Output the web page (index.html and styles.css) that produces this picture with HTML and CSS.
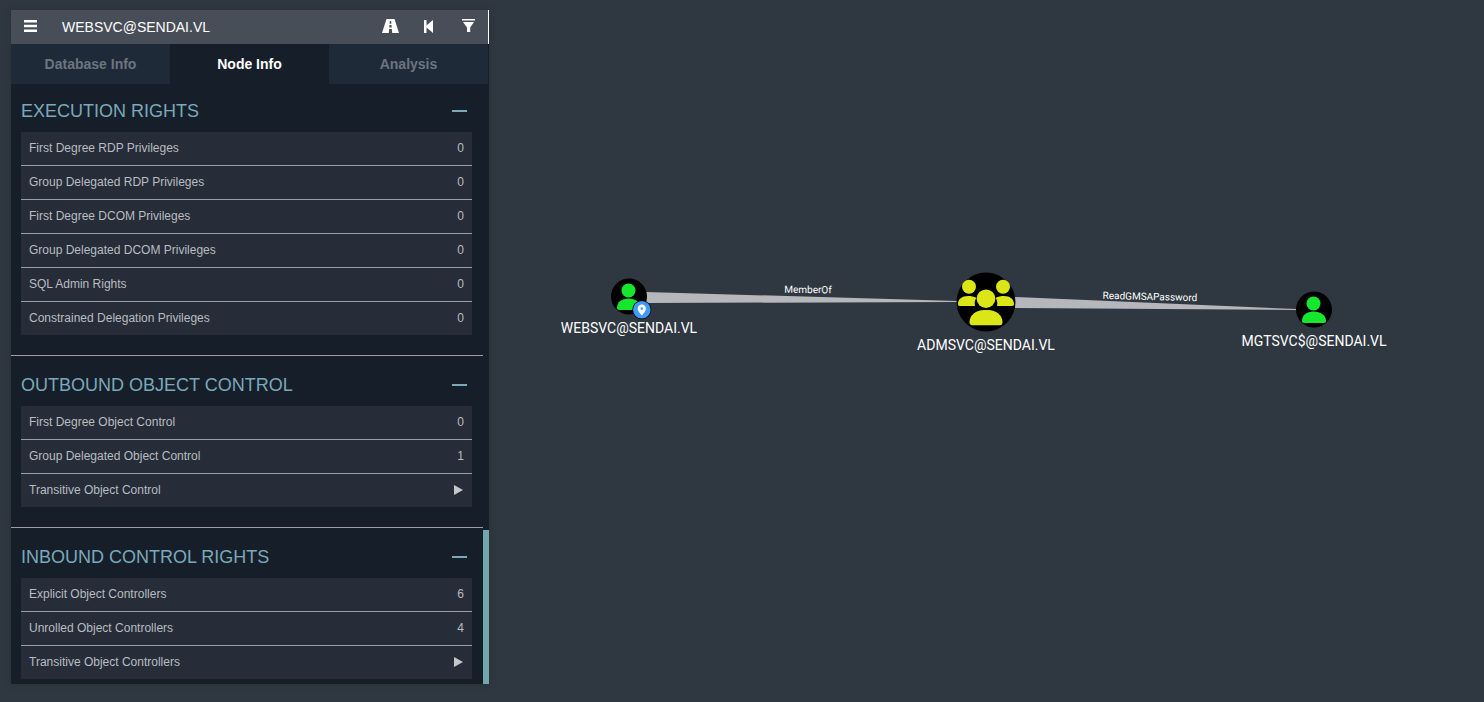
FILE: index.html
```html
<!DOCTYPE html>
<html lang="en">
<head>
    <meta charset="UTF-8">
    <title>BloodHound</title>
    <link rel="stylesheet" href="styles.css">
</head>
<body>
    <svg class="graph" width="1484" height="702" viewBox="0 0 1484 702">
        <defs>
            <g id="user-icon">
                <circle cx="-0.5" cy="-6.5" r="7"/>
                <path d="M-12 11 C-12 5 -7 1.500 -1 1.500 L0 1.500 C6 1.500 12 5 12 11 C12 12.300 11.500 13 10 13 L-10 13 C-11.500 13 -12 12.300 -12 11 Z"/>
            </g>
        </defs>

        <polygon class="edge" points="646,292 646,303 957,302 957,301"/>
        <polygon class="edge" points="1015,297 1015,308 1296,310 1296,309"/>
        <text class="edge-label" x="808" y="293" transform="rotate(0.7 808 289)">MemberOf</text>
        <text class="edge-label" x="1150" y="300" transform="rotate(1.4 1150 296)">ReadGMSAPassword</text>

        <circle cx="629" cy="296.500" r="18"/>
        <use href="#user-icon" x="629" y="297" class="user"/>
        <circle cx="641.800" cy="309.700" r="9.500" fill="#000"/>
        <circle cx="641.800" cy="309.700" r="8.800" fill="#3f9bf7"/>
        <path class="pin" d="M641.800 315.800 C639.600 312.900 637.700 310.800 637.700 308.500 C637.700 306.200 639.500 304.400 641.800 304.400 C644.100 304.400 645.900 306.200 645.900 308.500 C645.900 310.800 644 312.900 641.800 315.800 Z M641.800 307.200 A1.300 1.300 0 1 0 641.800 309.800 A1.300 1.300 0 1 0 641.800 307.200 Z"/>
        <text class="node-label" x="629" y="333">WEBSVC@SENDAI.VL</text>

        <circle cx="986" cy="302" r="29.500"/>
        <g class="group">
            <circle cx="969" cy="286.700" r="7"/>
            <circle cx="1003" cy="286.700" r="7"/>
            <path d="M958 304 C958 299 962 296 968 296 C971 296 974 296.500 976.500 298 C974.800 300 974.300 302.500 975 306 L960 306 C958.500 306 958 305.200 958 304 Z"/>
            <path d="M1014 304 C1014 299 1010 296 1004 296 C1001 296 998 296.500 995.500 298 C997.200 300 997.700 302.500 997 306 L1012 306 C1013.500 306 1014 305.200 1014 304 Z"/>
            <circle cx="986" cy="298.700" r="9.300"/>
            <path d="M969.500 322 C969.500 315 976 310 984 310 L988 310 C996 310 1002.500 315 1002.500 322 C1002.500 324.300 1001.500 325.300 999.500 325.300 L972.500 325.300 C970.500 325.300 969.500 324.300 969.500 322 Z"/>
        </g>
        <text class="node-label" x="986" y="350">ADMSVC@SENDAI.VL</text>

        <circle cx="1314" cy="309.500" r="18"/>
        <use href="#user-icon" x="1314" y="310" class="user"/>
        <text class="node-label" x="1314" y="346">MGTSVC$@SENDAI.VL</text>
    </svg>

    <div class="panel">
        <div class="panel-header">
            <button class="icon-btn menu-btn">
                <svg width="13" height="12" viewBox="0 0 13 12"><path d="M0 0h13v2.400H0zM0 4.800h13v2.400H0zM0 9.600h13V12H0z"/></svg>
            </button>
            <div class="node-name">WEBSVC@SENDAI.VL</div>
            <button class="icon-btn road-btn">
                <svg width="17" height="14" viewBox="0 0 17 14"><path fill-rule="evenodd" d="M4.500 0h8L17 14h-6.800l-.4-4H7.200l-.4 4H0zM7.800 2l-.2 2.800h1.800L9.200 2zM7.500 6l-.2 2.500h2.400L9.500 6z"/></svg>
            </button>
            <button class="icon-btn back-btn">
                <svg width="9" height="13" viewBox="0 0 9 13"><path d="M0 0h2.500v5.500L9 0v13L2.500 7.500V13H0z"/></svg>
            </button>
            <button class="icon-btn filter-btn">
                <svg width="13" height="14" viewBox="0 0 13 14"><path d="M0 0h13v1.500H0zM1 3h11L8.200 8.500V13L5 13V8.500z"/></svg>
            </button>
        </div>

        <div class="tabs">
            <div class="tab">Database Info</div>
            <div class="tab active">Node Info</div>
            <div class="tab">Analysis</div>
        </div>

        <div class="panel-body">
            <div class="section">
                <div class="section-head">
                    <h4>EXECUTION RIGHTS</h4>
                    <span class="collapse"></span>
                </div>
                <div class="rows">
                    <div class="row"><span>First Degree RDP Privileges</span><span>0</span></div>
                    <div class="row"><span>Group Delegated RDP Privileges</span><span>0</span></div>
                    <div class="row"><span>First Degree DCOM Privileges</span><span>0</span></div>
                    <div class="row"><span>Group Delegated DCOM Privileges</span><span>0</span></div>
                    <div class="row"><span>SQL Admin Rights</span><span>0</span></div>
                    <div class="row"><span>Constrained Delegation Privileges</span><span>0</span></div>
                </div>
            </div>

            <div class="section">
                <div class="section-head">
                    <h4>OUTBOUND OBJECT CONTROL</h4>
                    <span class="collapse"></span>
                </div>
                <div class="rows">
                    <div class="row"><span>First Degree Object Control</span><span>0</span></div>
                    <div class="row"><span>Group Delegated Object Control</span><span>1</span></div>
                    <div class="row"><span>Transitive Object Control</span><span class="play"></span></div>
                </div>
            </div>

            <div class="section">
                <div class="section-head">
                    <h4>INBOUND CONTROL RIGHTS</h4>
                    <span class="collapse"></span>
                </div>
                <div class="rows">
                    <div class="row"><span>Explicit Object Controllers</span><span>6</span></div>
                    <div class="row"><span>Unrolled Object Controllers</span><span>4</span></div>
                    <div class="row"><span>Transitive Object Controllers</span><span class="play"></span></div>
                </div>
            </div>
        </div>

        <div class="scroll-thumb"></div>
    </div>
</body>
</html>
```

FILE: styles.css
```css
* {
    margin: 0;
    padding: 0;
    box-sizing: border-box;
}

html, body {
    height: 100%;
    overflow: hidden;
}

body {
    background: #2f3840;
    font-family: 'Liberation Sans', Arial, sans-serif;
    padding: 10px 0 0 11px;
}

/* graph canvas */
.graph {
    position: absolute;
    top: 0;
    left: 0;
}

.edge {
    fill: #b6b7bb;
}

.edge-label {
    font-family: Roboto, sans-serif;
    font-size: 10px;
    fill: #fff;
    text-anchor: middle;
}

.node-label {
    font-family: Roboto, sans-serif;
    font-size: 14px;
    fill: #fff;
    text-anchor: middle;
}

.user {
    fill: #17e62f;
}

.group {
    fill: #dbe617;
}

.pin {
    fill: #fff;
    fill-rule: evenodd;
}

/* side panel */
.panel {
    position: relative;
    width: 478px;
    height: 674px;
    background: #161e29;
    box-shadow: 0 0 8px rgba(0, 0, 0, 0.15);
    overflow: hidden;
}

.panel-header {
    display: flex;
    align-items: center;
    height: 34px;
    background: #474e58;
    border-right: 1px solid #fff;
    color: #fff;
}

.icon-btn {
    display: flex;
    align-items: center;
    justify-content: center;
    background: none;
    border: none;
    margin-bottom: 2px;
}

.icon-btn svg {
    display: block;
    fill: #fff;
}

.menu-btn {
    width: 13px;
    margin-left: 13px;
}

.node-name {
    flex: 1;
    margin-left: 25px;
    font-size: 14px;
}

.road-btn {
    width: 17px;
}

.back-btn {
    width: 9px;
    margin-left: 25px;
}

.filter-btn {
    width: 13px;
    margin-left: 29px;
    margin-right: 13px;
}

.tabs {
    display: flex;
    width: 477px;
    height: 40px;
}

.tab {
    flex: 1;
    display: flex;
    align-items: center;
    justify-content: center;
    background: #1f2a38;
    color: #6c7580;
    font-size: 14px;
    font-weight: bold;
}

.tab.active {
    background: #161e29;
    color: #fff;
}

.panel-body {
    width: 472px;
    padding-top: 6px;
}

.section {
    padding: 0 11px 20px 10px;
}

.section + .section {
    border-top: 1px solid #9a9ea6;
    padding-top: 8px;
}

.section-head {
    display: flex;
    align-items: center;
    justify-content: space-between;
    height: 42px;
    padding-right: 5px;
}

.section-head h4 {
    color: #7aa9bb;
    font-size: 18px;
    font-weight: normal;
}

.collapse {
    width: 15px;
    height: 2.500px;
    background: #7aa9bb;
}

.row {
    display: flex;
    align-items: center;
    justify-content: space-between;
    height: 34px;
    padding: 0 8px 2px;
    background: #262d38;
    border-bottom: 1px solid #9a9ea6;
    color: #b9bcc1;
    font-size: 12px;
}

.row:last-child {
    height: 33px;
    border-bottom: none;
}

.play {
    width: 0;
    height: 0;
    margin-right: 1px;
    border-left: 9px solid #c4c6c9;
    border-top: 5.500px solid transparent;
    border-bottom: 5.500px solid transparent;
}

/* overlay scrollbar */
.scroll-thumb {
    position: absolute;
    top: 520px;
    right: 0;
    width: 6px;
    height: 154px;
    background: #72a7ad;
}
```
